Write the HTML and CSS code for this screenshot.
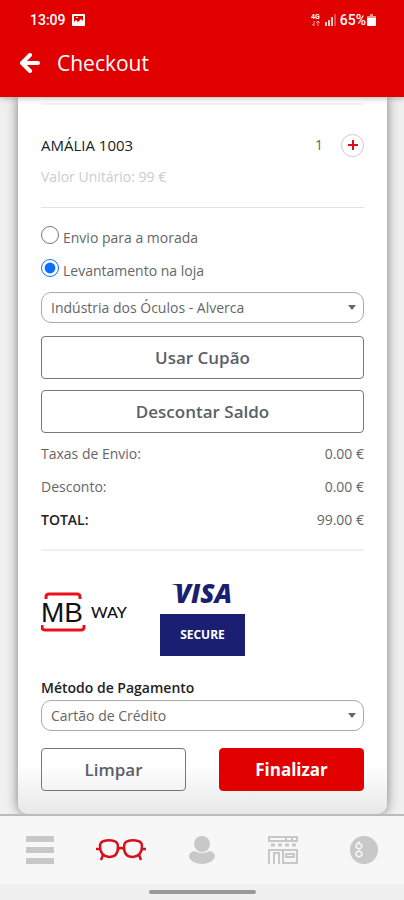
FILE: index.html
```
<!DOCTYPE html>
<html lang="pt">
<head>
    <meta charset="UTF-8">
    <meta name="viewport" content="width=device-width, initial-scale=1.0">
    <title>Checkout</title>
    <link rel="stylesheet" href="styles.css">
</head>
<body>
    <header class="header">
        <div class="status-bar">
            <span>13:09</span>
            <svg width="13" height="13" viewBox="0 0 13 13">
                <path fill="#fff" fill-rule="evenodd" d="M1 0h11a1 1 0 0 1 1 1v10a1 1 0 0 1-1 1H1a1 1 0 0 1-1-1V1a1 1 0 0 1 1-1zM2 2v6l2-2 2 2 3-3 2 2V2zM4 3h2v1H4z"/>
            </svg>
            <div class="status-right">
                <svg width="10" height="14" viewBox="0 0 10 14">
                    <text class="network" x="0" y="6">4G</text>
                    <path fill="none" stroke="#fff" opacity=".6" d="M3 8v5M1 11l2 2M7 13V8M5 10l2-2 2 2"/>
                </svg>
                <svg width="11" height="12" viewBox="0 0 11 12">
                    <path fill="#fff" opacity=".8" d="M0 8h2v4H0zM3 6h2v6H3zM6 3h2v9H6z"/>
                    <path fill="#fff" opacity=".3" d="M9 0h2v12H9z"/>
                </svg>
                <span>65%</span>
                <svg width="9" height="13" viewBox="0 0 9 13">
                    <path fill="#fff" opacity=".6" d="M3 0h3v2h3v3H0V2h3z"/>
                    <path fill="#fff" d="M0 4h9v7a1 1 0 0 1-1 1H1a1 1 0 0 1-1-1z"/>
                </svg>
            </div>
        </div>
        <div class="title-bar">
            <button class="back" aria-label="Voltar">
                <svg width="20" height="20" viewBox="0 0 20 20" fill="none" stroke="#fff" stroke-width="4">
                    <path d="M10 2L2 10l8 8M3 10h15" stroke-linejoin="round" stroke-linecap="round"/>
                </svg>
            </button>
            <h1>Checkout</h1>
        </div>
    </header>

    <main class="content">
        <form class="card">
            <section class="item">
                <div class="item-row">
                    <span class="item-name">AMÁLIA 1003</span>
                    <span class="quantity">1</span>
                    <button type="button" class="plus" aria-label="Adicionar">
                        <svg width="10" height="10" viewBox="0 0 10 10"><path d="M5 0v10M0 5h10" stroke="#d8101c" stroke-width="2"/></svg>
                    </button>
                </div>
                <div class="unit-price">Valor Unitário: 99 €</div>
            </section>

            <section class="shipping">
                <label class="radio"><input type="radio" name="envio"><span>Envio para a morada</span></label>
                <label class="radio"><input type="radio" name="envio" checked><span>Levantamento na loja</span></label>
                <div class="select">
                    <select aria-label="Loja">
                        <option>Indústria dos Óculos - Alverca</option>
                    </select>
                </div>
                <button type="button" class="btn">Usar Cupão</button>
                <button type="button" class="btn">Descontar Saldo</button>
                <dl class="totals">
                    <div><dt>Taxas de Envio:</dt><dd>0.00 €</dd></div>
                    <div><dt>Desconto:</dt><dd>0.00 €</dd></div>
                    <div><dt class="total">TOTAL:</dt><dd>99.00 €</dd></div>
                </dl>
            </section>

            <section class="payment">
                <div class="logos">
                    <svg class="mbway" width="86" height="40" viewBox="0 0 86 40">
                        <path d="M5 7V5q0-3 3-3h28q3 0 3 3v2M1 33v2q0 3 3 3h36q3 0 3-3v-2" fill="none" stroke="#e8101c" stroke-width="3"/>
                        <text class="mb" x="0" y="30">MB</text>
                        <text class="way" x="50" y="26">WAY</text>
                    </svg>
                    <div class="visa">
                        <svg width="68" height="38" viewBox="0 0 68 38">
                            <path d="M2 10h9l2 5q-4-4-11-5z" fill="#1a1f71"/>
                            <text class="visa-name" x="6" y="29">VISA</text>
                        </svg>
                        <div class="secure">SECURE</div>
                    </div>
                </div>
                <label class="method" for="metodo">Método de Pagamento</label>
                <div class="select">
                    <select id="metodo">
                        <option>Cartão de Crédito</option>
                    </select>
                </div>
                <div class="actions">
                    <button type="reset" class="btn">Limpar</button>
                    <button type="submit" class="btn btn-primary">Finalizar</button>
                </div>
            </section>
        </form>
    </main>

    <nav class="tabs">
        <a href="#" aria-label="Menu">
            <svg width="28" height="28" viewBox="0 0 28 28"><path d="M0 0h28v6H0zM0 11h28v6H0zM0 22h28v6H0z" fill="#c8c8c8"/></svg>
        </a>
        <a href="#" aria-label="Óculos">
            <svg width="50" height="24" viewBox="0 0 50 24" fill="none" stroke="#d8101c" stroke-width="2.5">
                <path d="M4 8Q4 4 8 3q5-1.500 10 0 4 1 4 6 0 10-9 10Q4 18 4 8zM46 8q0-4-4-5-5-1.500-10 0-4 1-4 6 0 10 9 10 9-1 9-11z"/>
                <path d="M22 11q3-2 6 0M0 11h4M46 11h4M7 17l-2 5M43 17l2 5"/>
            </svg>
        </a>
        <a href="#" aria-label="Conta">
            <svg width="28" height="28" viewBox="0 0 28 28" fill="#c8c8c8">
                <circle cx="14" cy="8" r="8"/>
                <path d="M6 15q8 4 16 0 5 2 5 5c0 4-6 8-13 8S1 24 1 20q0-3 5-5z"/>
            </svg>
        </a>
        <a href="#" aria-label="Lojas">
            <svg width="30" height="28" viewBox="0 0 30 28" fill="none" stroke="#c8c8c8" stroke-width="2">
                <path d="M1 1h28v4H1zM18 1v4M24 1v4"/>
                <path d="M3 9h4M10 9h4M17 9h4M24 9h4" stroke-width="3"/>
                <path d="M1 28V14h28v13H15V14M6 28V17h5v11M18 18h8v3h-8z"/>
            </svg>
        </a>
        <a href="#" aria-label="Saldo">
            <svg width="28" height="28" viewBox="0 0 28 28">
                <circle cx="14" cy="14" r="14" fill="#c8c8c8"/>
                <path d="M10 6q-4 2-4 4t3 3q3-1 3-3t-3-2M9 15q-3 1-3 3t3 3q3-1 3-3t-3-3z" fill="none" stroke="#f7f7f7" stroke-width="1.500"/>
            </svg>
        </a>
    </nav>
    <div class="gesture-bar"><span></span></div>
</body>
</html>
```
FILE: styles.css
```
* {
    box-sizing: border-box;
}

body {
    margin: 0;
    min-height: 100vh;
    display: flex;
    flex-direction: column;
    font-family: "Open Sans", "Noto Sans", sans-serif;
    font-size: 14px;
    line-height: 20px;
    color: #666;
    background-color: #f0f0f0;
}

button, select {
    font-family: inherit;
    cursor: pointer;
}

.header {
    position: relative;
    height: 97px;
    background-color: #e00000;
    color: #fff;
    box-shadow: 0 1px 6px rgba(0, 0, 0, 0.3);
}

.status-bar {
    display: flex;
    align-items: center;
    gap: 6px;
    height: 40px;
    padding: 0 28px 0 30px;
    font-family: Roboto, sans-serif;
    font-size: 14px;
    font-weight: 500;
}

.status-right {
    display: flex;
    align-items: center;
    gap: 4px;
    margin-left: auto;
}

.status-right span {
    margin-right: -3px;
}

.network {
    font-size: 7px;
    font-weight: 700;
    fill: #fff;
}

.title-bar {
    display: flex;
    align-items: center;
    gap: 17px;
    height: 46px;
    padding-left: 20px;
}

.title-bar h1 {
    margin: 0;
    font-size: 21px;
    font-weight: 400;
    line-height: 28px;
}

.back {
    display: flex;
    padding: 0;
    border: 0;
    background: none;
}

.content {
    flex: 1;
    padding: 0 17px 0 18px;
    overflow: hidden;
}

.card {
    padding: 6px 23px 23px;
    border-radius: 0 0 10px 10px;
    background: linear-gradient(#fff 93%, #e8e8e8);
    box-shadow: 0 0 12px rgba(0, 0, 0, 0.5);
}

.item {
    padding: 28px 0 20px;
    border-top: 2px solid #f2f2f2;
    border-bottom: 1px solid #e2e2e2;
}

.item-row {
    display: flex;
    align-items: center;
    height: 24px;
}

.item-name {
    flex: 1;
    font-size: 15px;
    font-weight: 500;
    color: #222;
}

.quantity {
    margin-right: 18px;
}

.plus {
    display: flex;
    align-items: center;
    justify-content: center;
    width: 23px;
    height: 23px;
    padding: 0;
    border: 1px solid #ccc;
    border-radius: 50%;
    background-color: #fff;
}

.unit-price {
    margin-top: 10px;
    color: #ccc;
}

.shipping {
    padding: 15px 0 19px;
    border-bottom: 2px solid #f0f0f0;
}

.radio {
    display: flex;
    gap: 4px;
    height: 33px;
}

.radio span {
    padding-top: 5px;
}

.radio input {
    width: 18px;
    height: 18px;
    margin: 3px 0;
    accent-color: #0d6efd;
}

.select {
    position: relative;
    margin: 3px 0 13px;
}

.select::after {
    content: "";
    position: absolute;
    right: 8px;
    top: 13px;
    border: 4px solid transparent;
    border-top: 5px solid #666;
    pointer-events: none;
}

.select select {
    display: block;
    width: 100%;
    height: 31px;
    padding: 0 24px 0 9px;
    border: 1px solid #aaa;
    border-radius: 10px;
    appearance: none;
    background-color: transparent;
    font-size: 14px;
    color: #666;
}

.btn {
    display: block;
    width: 100%;
    height: 43px;
    margin-bottom: 11px;
    padding: 0;
    border: 1px solid #777;
    border-radius: 4px;
    background-color: transparent;
    font-size: 17px;
    font-weight: 600;
    color: #5a5f68;
}

.btn-primary {
    border-color: #e00000;
    background-color: #e00000;
    font-weight: 700;
    color: #fff;
}

.totals {
    margin: 0;
}

.totals div {
    display: flex;
    justify-content: space-between;
    height: 33px;
}

.totals div:last-child {
    height: 20px;
}

.totals dd {
    margin: 0;
}

.totals .total {
    font-weight: 600;
    color: #222;
}

.logos {
    display: flex;
    align-items: center;
    gap: 33px;
    height: 127px;
}

.mbway {
    margin-bottom: 6px;
}

.mb {
    font-family: "Liberation Sans", sans-serif;
    font-size: 28px;
    fill: #111;
}

.way {
    font-family: Lato, sans-serif;
    font-size: 16px;
    font-weight: 500;
    fill: #111;
}

.visa {
    display: flex;
    flex-direction: column;
    align-items: center;
    gap: 2px;
}

.visa-name {
    font-size: 26px;
    font-weight: 800;
    font-style: italic;
    fill: #1a1f71;
}

.secure {
    width: 85px;
    padding: 11px 0;
    background-color: #1a1f71;
    text-align: center;
    font-size: 12px;
    font-weight: 700;
    color: #fff;
}

.method {
    display: block;
    font-size: 14px;
    font-weight: 600;
    color: #222;
}

.payment .select {
    margin: 2px 0 17px;
}

.actions {
    display: grid;
    grid-template-columns: 1fr 1fr;
    gap: 33px;
}

.actions .btn {
    margin: 0;
}

.tabs {
    position: relative;
    display: grid;
    grid-template-columns: repeat(5, 1fr);
    align-items: center;
    height: 70px;
    border-top: 2px solid #bbb;
    background-color: #f7f7f7;
}

.tabs a {
    display: flex;
    justify-content: center;
}

.gesture-bar {
    height: 16px;
    padding-top: 6px;
    background-color: #f0f0f0;
}

.gesture-bar span {
    display: block;
    width: 107px;
    height: 4px;
    margin: 0 auto;
    border-radius: 2px;
    background-color: #999;
}
```
